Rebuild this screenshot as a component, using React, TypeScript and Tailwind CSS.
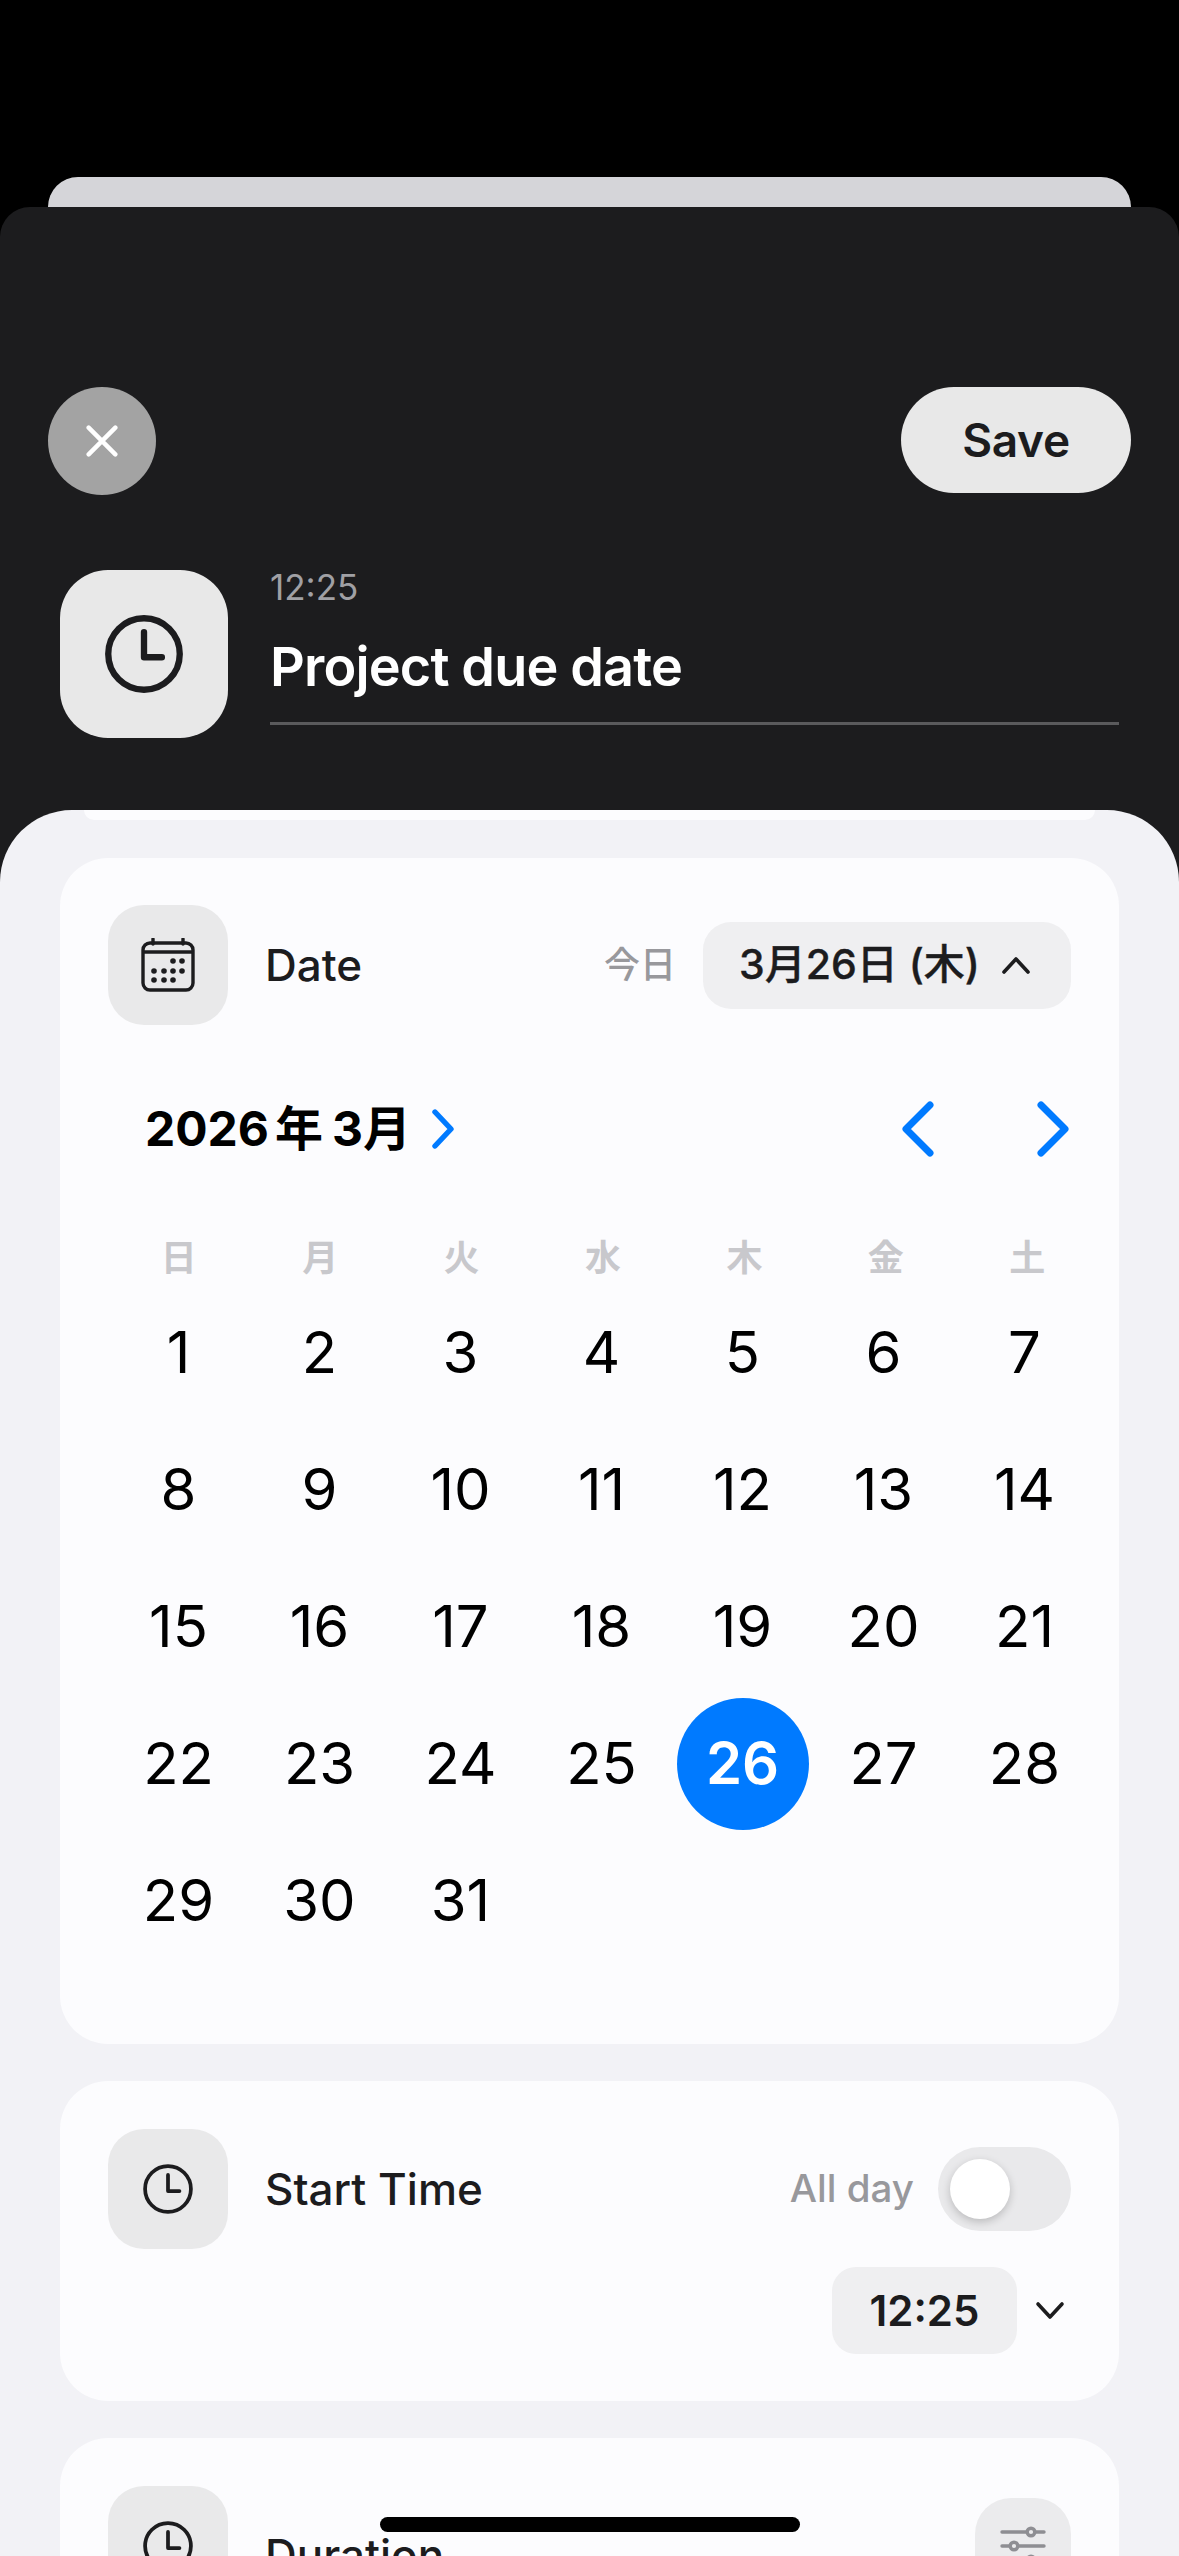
const font = { fontFamily: 'Inter, "Noto Sans CJK JP", sans-serif' };

function ClockIcon({ size, stroke }: { size: number; stroke: number }) {
  return (
    <svg width={size} height={size} viewBox="0 0 48 48" fill="none" stroke="#1c1c1e" strokeWidth={stroke} strokeLinecap="round" strokeLinejoin="round">
      <circle cx="24" cy="24" r="22" />
      <path d="M24 10.5V26H35" />
    </svg>
  );
}

function CalendarIcon() {
  return (
    <svg width="54" height="54" viewBox="0 0 54 54" fill="none">
      <rect x="2" y="5" width="50" height="47" rx="7" stroke="#1c1c1e" strokeWidth="3.4" />
      <path d="M2 14H52" stroke="#1c1c1e" strokeWidth="3.4" />
      <path d="M12 1V6M42 1V6" stroke="#1c1c1e" strokeWidth="3.4" strokeLinecap="round" />
      {[[32, 23], [41, 23], [13, 33], [23, 33], [32, 33], [41, 33], [13, 42], [23, 42], [32, 42]].map(([x, y]) => (
        <circle key={`${x}-${y}`} cx={x} cy={y} r="2.8" fill="#1c1c1e" />
      ))}
    </svg>
  );
}

function Chevron({ w, h, d, color, stroke }: { w: number; h: number; d: string; color: string; stroke: number }) {
  return (
    <svg width={w} height={h} viewBox={`0 0 ${w} ${h}`} fill="none" stroke={color} strokeWidth={stroke} strokeLinecap="round" strokeLinejoin="round">
      <path d={d} />
    </svg>
  );
}

function IconBox({ children }: { children: React.ReactNode }) {
  return <div className="flex h-[120px] w-[120px] shrink-0 items-center justify-center rounded-[36px] bg-[#e9e9ea]">{children}</div>;
}

const weekdays = ['日', '月', '火', '水', '木', '金', '土'];
const days = Array.from({ length: 31 }, (_, i) => i + 1);

export default function App() {
  return (
    <div className="flex h-[2556px] w-[1179px] flex-col overflow-hidden bg-black pt-[177px]" style={font}>
      <div className="mx-[48px] h-[30px] shrink-0 rounded-t-[30px] bg-[#d5d5d9]" />
      <div className="flex flex-1 flex-col rounded-t-[30px] bg-[#1c1c1e] pt-[180px]">
        <div className="flex items-start justify-between px-[48px]">
          <button className="flex h-[108px] w-[108px] items-center justify-center rounded-full bg-[#a3a3a3]">
            <svg width="32" height="32" viewBox="0 0 36 36" stroke="#fff" strokeWidth="5" strokeLinecap="round">
              <path d="M3 3L33 33M33 3L3 33" />
            </svg>
          </button>
          <button className="flex h-[106px] w-[230px] items-center justify-center rounded-full bg-[#e8e8e8] text-[46px] font-semibold tracking-[-0.3px] text-[#1c1c1e]">
            Save
          </button>
        </div>
        <div className="mt-[75px] flex px-[60px]">
          <div className="flex h-[168px] w-[168px] shrink-0 items-center justify-center rounded-[48px] bg-[#e8e8e8]">
            <ClockIcon size={78} stroke={3.9} />
          </div>
          <div className="ml-[42px] h-[155px] flex-1 border-b-[3px] border-[#5a5a5c]">
            <div className="mt-[-3px] text-[35px] leading-[40px] text-[#a0a0a4]">12:25</div>
            <div className="mt-[27px] text-[54px] leading-[66px] font-semibold tracking-[-0.85px] text-white">Project due date</div>
          </div>
        </div>
        <div className="mt-[72px] flex-1 rounded-t-[72px] bg-[#f2f2f6]">
          <div className="mx-[84px] h-[10px] rounded-b-[14px] bg-[#fcfcfe]" />
          <div className="px-[60px] pt-[38px]">
            <section className="rounded-[48px] bg-[#fcfcfe] pt-[47px] pb-[75px]">
              <div className="flex items-center px-[48px]">
                <IconBox>
                  <CalendarIcon />
                </IconBox>
                <span className="ml-[37px] text-[44px] font-medium text-[#1c1c1e]">Date</span>
                <span className="ml-auto text-[36px] font-medium text-[#98989c]">今日</span>
                <div className="ml-[27px] flex h-[87px] w-[368px] items-center rounded-[28px] bg-[#efeff1] pl-[36px]">
                  <span className="text-[41px] font-medium text-[#1c1c1e] [-webkit-text-stroke:0.4px_#1c1c1e]">3月26日 (木)</span>
                  <span className="ml-[21px] flex">
                    <Chevron w={30} h={20} d="M3 17L15 4L27 17" color="#1c1c1e" stroke={3.6} />
                  </span>
                </div>
              </div>
              <div className="mt-[64px] flex h-[80px] items-center pr-[48px] pl-[85px]">
                <span className="text-[48px] font-bold text-black">
                  2026<span className="ml-[6px]">年</span>
                  <span className="ml-[9px]">3月</span>
                </span>
                <span className="ml-[20px] flex">
                  <Chevron w={24} h={40} d="M4 3L20 20L4 37" color="#007aff" stroke={5.4} />
                </span>
                <span className="ml-auto flex">
                  <Chevron w={34} h={56} d="M30 4L6 28L30 52" color="#007aff" stroke={7} />
                </span>
                <span className="ml-[103px] flex">
                  <Chevron w={34} h={56} d="M4 4L28 28L4 52" color="#007aff" stroke={7} />
                </span>
              </div>
              <div className="mt-[64px] ml-[48px]">
                <div className="grid h-[50px] w-[990px] grid-cols-7 items-center">
                  {weekdays.map((d) => (
                    <div key={d} className="text-center text-[36px] leading-[50px] font-semibold text-[#c8c8cc]">
                      {d}
                    </div>
                  ))}
                </div>
                <div className="mt-[1px] grid w-[987px] grid-cols-7">
                  {days.map((d) => (
                    <div key={d} className="flex h-[137px] items-center justify-center">
                      {d === 26 ? (
                        <div className="flex h-[132px] w-[132px] items-center justify-center rounded-full bg-[#007aff] text-[58px] font-semibold text-white">{d}</div>
                      ) : (
                        <span className="text-[58px] text-black">{d}</span>
                      )}
                    </div>
                  ))}
                </div>
              </div>
            </section>
            <section className="mt-[37px] rounded-[48px] bg-[#fcfcfe] px-[48px] pt-[48px] pb-[47px]">
              <div className="flex items-center">
                <IconBox>
                  <ClockIcon size={50} stroke={3.6} />
                </IconBox>
                <span className="ml-[37px] text-[44px] font-medium text-[#1c1c1e]">Start Time</span>
                <span className="ml-auto text-[38.5px] font-medium text-[#98989c]">All day</span>
                <div className="ml-[24px] flex h-[84px] w-[133px] items-center rounded-full bg-[#e9e9eb] pl-[12px]">
                  <div className="h-[60px] w-[60px] rounded-full bg-white shadow-[0_3px_8px_rgba(0,0,0,0.2)]" />
                </div>
              </div>
              <div className="mt-[18px] flex items-center justify-end">
                <div className="flex h-[87px] w-[185px] items-center justify-center rounded-[24px] bg-[#efeff1] text-[42px] font-semibold text-[#1c1c1e]">12:25</div>
                <span className="mr-[6px] ml-[18px] flex">
                  <Chevron w={30} h={20} d="M3 3L15 16L27 3" color="#1c1c1e" stroke={3.6} />
                </span>
              </div>
            </section>
            <section className="mt-[37px] flex items-start rounded-[48px] bg-[#fcfcfe] px-[48px] pt-[48px] pb-[48px]">
              <IconBox>
                <ClockIcon size={50} stroke={3.6} />
              </IconBox>
              <span className="mt-[36px] ml-[37px] text-[44px] font-medium text-[#1c1c1e]">Duration</span>
              <div className="mt-[12px] ml-auto flex h-[96px] w-[96px] items-center justify-center rounded-[36px] bg-[#ebebed]">
                <svg width="46" height="46" viewBox="0 0 46 46" fill="#ebebed" stroke="#8e8e93" strokeWidth="3.4" strokeLinecap="round">
                  <path d="M2 9H44M2 23H44M2 37H44" />
                  <circle cx="31" cy="9" r="3.8" />
                  <circle cx="14" cy="23" r="3.8" />
                  <circle cx="31" cy="37" r="3.8" />
                </svg>
              </div>
            </section>
          </div>
        </div>
      </div>
      <div className="absolute top-[2517px] left-[380px] h-[15px] w-[420px] rounded-full bg-black" />
    </div>
  );
}
